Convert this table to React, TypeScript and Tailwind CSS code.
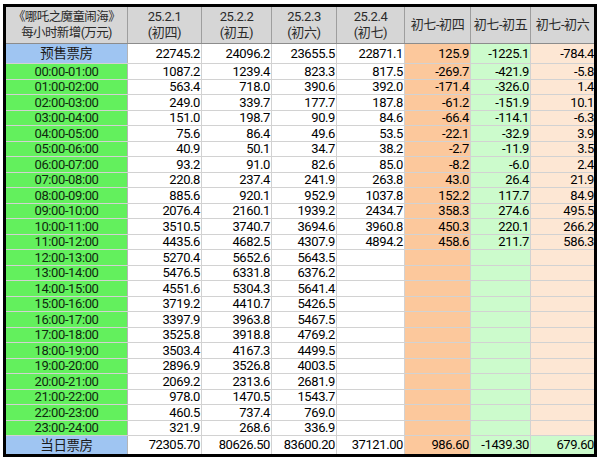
import React from 'react';

type Row = { label: string; values: string[] };

const rows: Row[] = [
  { label: '00:00-01:00', values: ['1087.2', '1239.4', '823.3', '817.5', '-269.7', '-421.9', '-5.8'] },
  { label: '01:00-02:00', values: ['563.4', '718.0', '390.6', '392.0', '-171.4', '-326.0', '1.4'] },
  { label: '02:00-03:00', values: ['249.0', '339.7', '177.7', '187.8', '-61.2', '-151.9', '10.1'] },
  { label: '03:00-04:00', values: ['151.0', '198.7', '90.9', '84.6', '-66.4', '-114.1', '-6.3'] },
  { label: '04:00-05:00', values: ['75.6', '86.4', '49.6', '53.5', '-22.1', '-32.9', '3.9'] },
  { label: '05:00-06:00', values: ['40.9', '50.1', '34.7', '38.2', '-2.7', '-11.9', '3.5'] },
  { label: '06:00-07:00', values: ['93.2', '91.0', '82.6', '85.0', '-8.2', '-6.0', '2.4'] },
  { label: '07:00-08:00', values: ['220.8', '237.4', '241.9', '263.8', '43.0', '26.4', '21.9'] },
  { label: '08:00-09:00', values: ['885.6', '920.1', '952.9', '1037.8', '152.2', '117.7', '84.9'] },
  { label: '09:00-10:00', values: ['2076.4', '2160.1', '1939.2', '2434.7', '358.3', '274.6', '495.5'] },
  { label: '10:00-11:00', values: ['3510.5', '3740.7', '3694.6', '3960.8', '450.3', '220.1', '266.2'] },
  { label: '11:00-12:00', values: ['4435.6', '4682.5', '4307.9', '4894.2', '458.6', '211.7', '586.3'] },
  { label: '12:00-13:00', values: ['5270.4', '5652.6', '5643.5', '', '', '', ''] },
  { label: '13:00-14:00', values: ['5476.5', '6331.8', '6376.2', '', '', '', ''] },
  { label: '14:00-15:00', values: ['4551.6', '5304.3', '5641.4', '', '', '', ''] },
  { label: '15:00-16:00', values: ['3719.2', '4410.7', '5426.5', '', '', '', ''] },
  { label: '16:00-17:00', values: ['3397.9', '3963.8', '5467.5', '', '', '', ''] },
  { label: '17:00-18:00', values: ['3525.8', '3918.8', '4769.2', '', '', '', ''] },
  { label: '18:00-19:00', values: ['3503.4', '4167.3', '4499.5', '', '', '', ''] },
  { label: '19:00-20:00', values: ['2896.9', '3526.8', '4003.5', '', '', '', ''] },
  { label: '20:00-21:00', values: ['2069.2', '2313.6', '2681.9', '', '', '', ''] },
  { label: '21:00-22:00', values: ['978.0', '1470.5', '1543.7', '', '', '', ''] },
  { label: '22:00-23:00', values: ['460.5', '737.4', '769.0', '', '', '', ''] },
  { label: '23:00-24:00', values: ['321.9', '268.6', '336.9', '', '', '', ''] },
];

const presale = ['22745.2', '24096.2', '23655.5', '22871.1', '125.9', '-1225.1', '-784.4'];
const total = ['72305.70', '80626.50', '83600.20', '37121.00', '986.60', '-1439.30', '679.60'];

// widths of the 7 data columns (incl. right border)
const widths = ['w-[74px]', 'w-[70px]', 'w-[65px]', 'w-[68px]', 'w-[66px]', 'w-[60px]', 'w-[63px]'];
const bodyBg = ['bg-white', 'bg-white', 'bg-white', 'bg-white', 'bg-[#fcc89c]', 'bg-[#ccfbcc]', 'bg-[#fde7d4]'];
const totalBg = ['bg-white', 'bg-white', 'bg-white', 'bg-white', 'bg-[#fcc89c]', 'bg-[#ccfbcc]', 'bg-[#ccfbcc]'];

const headers: [string, string?][] = [
  ['25.2.1', '(初四)'],
  ['25.2.2', '(初五)'],
  ['25.2.3', '(初六)'],
  ['25.2.4', '(初七)'],
  ['初七-初四'],
  ['初七-初五'],
  ['初七-初六'],
];

function DataCells({ values, bgs, height }: { values: string[]; bgs: string[]; height: string }) {
  return (
    <>
      {values.map((v, i) => (
        <div
          key={i}
          className={`${widths[i]} ${bgs[i]} ${height} flex items-center justify-end ${
            i < 6 ? 'border-r border-[#d2d2d2] pr-[1px]' : ''
          }`}
        >
          {v}
        </div>
      ))}
    </>
  );
}

export default function App() {
  return (
    <div className="w-[600px] h-[460px] bg-white pt-[4px] pl-[3px] font-['Roboto','Noto_Sans_CJK_SC',sans-serif] text-[13px] text-black tracking-[-0.4px]">
      <div className="w-fit border-[3px] border-black">
        {/* header */}
        <div className="flex h-[37px] bg-[#d6d6d6] border-b border-[#8c8c8c] text-[#2a2a2a] leading-[16px]">
          <div className="w-[122px] border-r border-[#9e9e9e] flex flex-col items-center justify-center text-[12.5px] tracking-[-0.6px]">
            <span>《哪吒之魔童闹海》</span>
            <span>每小时新增(万元)</span>
          </div>
          {headers.map(([a, b], i) => (
            <div
              key={i}
              className={`${widths[i]} flex flex-col items-center justify-center ${
                i < 6 ? 'border-r border-[#9e9e9e]' : ''
              }`}
            >
              <span>{a}</span>
              {b && <span>{b}</span>}
            </div>
          ))}
        </div>

        {/* presale */}
        <div className="flex h-[20px] border-b border-[#d2d2d2]">
          <div className="w-[122px] bg-[#9fc5f2] border-r border-[#b5b5b5] flex items-center justify-center text-[13.5px] text-[#1a1a1a]">
            预售票房
          </div>
          <DataCells values={presale} bgs={bodyBg} height="h-[19px]" />
        </div>

        {/* hourly */}
        {rows.map((r) => (
          <div key={r.label} className="flex h-[15.5px] border-b border-[#d2d2d2] leading-none">
            <div className="w-[122px] bg-[#63f05d] border-r border-[#b5b5b5] flex items-center justify-center text-[#0f2a0f]">
              {r.label}
            </div>
            <DataCells values={r.values} bgs={bodyBg} height="h-[14.5px]" />
          </div>
        ))}

        {/* total */}
        <div className="flex h-[18px]">
          <div className="w-[122px] bg-[#9fc5f2] border-r border-[#b5b5b5] flex items-center justify-center text-[13.5px] text-[#1a1a1a]">
            当日票房
          </div>
          <DataCells values={total} bgs={totalBg} height="h-[18px]" />
        </div>
      </div>
    </div>
  );
}
